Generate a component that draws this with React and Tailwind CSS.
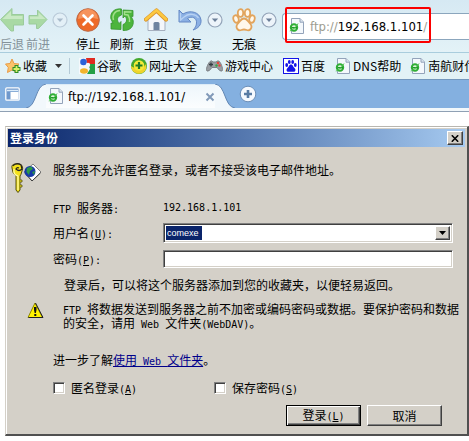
import React from "react";

const UI = "font-['Noto_Sans_CJK_SC',sans-serif]";
const URL_FONT = "font-['DejaVu_Sans_Condensed','DejaVu_Sans',sans-serif]";

/* Half-width latin text inside the dialog */
function L({ children }) {
  return (
    <span className="font-['DejaVu_Sans_Mono',monospace] text-[10px] leading-none whitespace-pre">{children}</span>
  );
}

function PageIcon() {
  return (
    <svg className="shrink-0" width="16" height="17" viewBox="0 0 16 17" aria-hidden="true">
      <path d="M2.500 .5H11L14.500 4V15.500H2.500Z" fill="#f4f8fc" stroke="#93a3ba" />
      <path d="M11 .5V4.200H14.500" fill="#dbe4ef" stroke="#93a3ba" />
      <circle cx="5" cy="9.500" r="3.200" fill="#e9f8e6" stroke="#2fae35" strokeWidth="2" />
      <path d="M2.500 9.700H8" stroke="#1d9a28" strokeWidth="1.500" />
      <path d="M.8 13C3 12.500 7.500 9 9 5.500" fill="none" stroke="#4cc04c" strokeWidth="1" />
    </svg>
  );
}

function ChevronButton({ className, label, faded }) {
  return (
    <button type="button" aria-label={label} className={"mt-3 h-4 w-4 shrink-0 " + className}>
      <svg width="16" height="16" viewBox="0 0 16 16" opacity={faded ? 0.45 : 1}>
        <circle cx="8" cy="8" r="7" fill="#edf4fa" stroke="#93a3b8" strokeWidth="1.200" />
        <path d="M4.800 6.500H11.200L8 10Z" fill="#6c7f99" />
      </svg>
    </button>
  );
}

function Tool({ label, className = "", children }) {
  return (
    <button type="button" className={"flex w-6 shrink-0 flex-col items-center pt-2 whitespace-nowrap " + className}>
      {children}
      <span className="mt-1 text-[12px] leading-4">{label}</span>
    </button>
  );
}

function BackIcon() {
  return (
    <svg width="24" height="24" viewBox="0 0 24 24">
      <path d="M.5 11.500L12 .5V6.500H23.500V17H13.500V23H11Z" fill="#a9d9a4" stroke="#9bcb9c" strokeLinejoin="round" />
      <path d="M2.500 11L11 3V8H22.500V11Z" fill="#c9e9c4" />
    </svg>
  );
}

function ForwardIcon() {
  return (
    <svg width="24" height="24" viewBox="0 0 24 24">
      <path d="M21 11.500L11.500 2V7.500H3V16H10.500V20.500H12.500Z" fill="#a9d9a4" stroke="#9bcb9c" strokeLinejoin="round" />
      <path d="M19.500 11L12.500 4.500V8.500H4V11Z" fill="#c9e9c4" />
    </svg>
  );
}

function StopIcon() {
  return (
    <svg width="24" height="24" viewBox="0 0 24 24">
      <circle cx="12" cy="12" r="11.300" fill="#ee6a28" stroke="#bb6a48" />
      <path d="M2 11A10 10 0 0 1 22 11Q12 8 2 11Z" fill="#f6935c" />
      <path d="M7.500 7.500L16.500 16.500M16.500 7.500L7.500 16.500" stroke="#fff" strokeWidth="2.600" strokeLinecap="round" />
    </svg>
  );
}

function RefreshIcon() {
  return (
    <svg width="24" height="24" viewBox="0 0 24 24">
      <path d="M11.500 1C4 0 0 5 .8 10.500L3 15.500L1 15V21L11 21.500V13.500L9 15.500C6.500 12 7 8.500 11.500 7Z" fill="#4cb53c" stroke="#36942e" strokeWidth=".8" strokeLinejoin="round" />
      <path d="M13 22.500C20.500 23 24 18 23.200 12.500L21 8L23 8.500V2.500L13 2V10L15 8C17.500 11.500 17 15 13 16.500Z" fill="#4cb53c" stroke="#36942e" strokeWidth=".8" strokeLinejoin="round" />
      <path d="M10 2.500C4.500 3 2 7 3.500 12M21.500 4L14.500 3.800V6.500L18 7Q20 10 19.500 14" fill="none" stroke="#a2e08c" strokeWidth="1.500" />
    </svg>
  );
}

function HomeIcon() {
  return (
    <svg width="24" height="24" viewBox="0 0 24 24">
      <path d="M4 10V22.500H21V10L12.500 3Z" fill="#f3f6fa" stroke="#a5afbe" />
      <path d="M9.500 22V15.500Q9.500 14 11 14H14Q15.500 14 15.500 15.500V22Z" fill="#6d83a0" />
      <path d="M2 11.500L12.500 2.500L22 11.500" fill="none" stroke="#d8912a" strokeWidth="4.200" strokeLinejoin="round" strokeLinecap="round" />
      <path d="M2 11.300L12.500 2.300L22 11.300" fill="none" stroke="#fcc840" strokeWidth="2.800" strokeLinejoin="round" strokeLinecap="round" />
    </svg>
  );
}

function UndoIcon() {
  return (
    <svg width="24" height="24" viewBox="0 0 24 24">
      <path
        d="M1 2V14H13L9.500 10.500C14 7.500 19 10 18.500 15C18.400 18 17 20 15 22C20 20.500 23.500 17 23 12C22 4 12 1.500 5 6Z"
        fill="#8bb0e4"
        stroke="#6488c4"
        strokeLinejoin="round"
      />
      <path d="M2.500 5V12L6 9C11 4.500 18 6 20.500 10" fill="none" stroke="#b8d2f3" strokeWidth="1.300" />
    </svg>
  );
}

function PawIcon() {
  return (
    <svg width="24" height="24" viewBox="0 0 24 24">
      <g fill="#fff8ec" stroke="#e2a45c" strokeWidth="1.800">
        <ellipse cx="4" cy="11" rx="2.600" ry="3.800" transform="rotate(-15 4 11)" />
        <ellipse cx="8.500" cy="5" rx="2.700" ry="3.900" />
        <ellipse cx="15.500" cy="5" rx="2.700" ry="3.900" />
        <ellipse cx="20" cy="11" rx="2.600" ry="3.800" transform="rotate(15 20 11)" />
        <path d="M12 10.500C8.500 10.500 8 14 5.500 16C3 19.500 6 23.500 9.500 22Q12 21 14.500 22C18 23.500 21 19.500 18.500 16C16 14 15.500 10.500 12 10.500Z" />
      </g>
    </svg>
  );
}

function StarIcon() {
  return (
    <svg width="16" height="16" viewBox="0 0 16 16">
      <path d="M7 1L9 5.500L14 6L10.500 9.500L11.500 14L7 12L2.500 14.500L3.300 9.500L.5 6L5 5.500Z" fill="#fbc36a" stroke="#e89c48" strokeLinejoin="round" />
      <path d="M11.500 7V15M7.500 11H15.500" stroke="#2f8c28" strokeWidth="4" />
      <path d="M11.500 8V14M8.500 11H14.500" stroke="#d7f26a" strokeWidth="1.800" />
    </svg>
  );
}

function GoogleIcon() {
  return (
    <svg width="16" height="16" viewBox="0 0 16 16">
      <rect width="16" height="16" fill="#f4f8fb" />
      <path d="M7 0H16V6H8Z" fill="#e02a20" />
      <path d="M9 6H16V16H8L11 11Z" fill="#23a045" />
      <path d="M0 9H5L7 16H0Z" fill="#f7f9fc" />
      <circle cx="4.500" cy="4" r="3.300" fill="#2c62d8" />
      <circle cx="9" cy="7" r="2.200" fill="#f4f8fb" />
      <ellipse cx="5" cy="13" rx="4" ry="2.800" fill="#f1b42b" />
    </svg>
  );
}

function NavSiteIcon() {
  return (
    <svg width="16" height="16" viewBox="0 0 16 16">
      <circle cx="8" cy="8" r="8" fill="#43a82c" />
      <path d="M0 8A8 8 0 0 0 14 13Q16 10 15 6Q10 15 0 8Z" fill="#efd32c" />
      <circle cx="8" cy="7.500" r="5.300" fill="#f5ea38" />
      <path d="M8 4V11M4.500 7.500H11.500" stroke="#207d27" strokeWidth="2.200" />
    </svg>
  );
}

function GamepadIcon() {
  return (
    <svg width="17" height="16" viewBox="0 0 17 16">
      <path d="M4 3.500Q5.500 2 7 4H10Q12 2 13.500 3.500C15.500 6 17.500 12 16 13Q14 14 11 9.500H6Q3 14 1 13C-.5 12 1.500 6 4 3.500Z" fill="#999ea2" stroke="#7c8186" />
      <path d="M3 6.500H7M5 4.500V8.500" stroke="#333b40" strokeWidth="1.300" />
      <circle cx="12" cy="5" r="1.300" fill="#e3463c" />
      <circle cx="13.500" cy="7.500" r="1.200" fill="#e3463c" />
      <circle cx="10.500" cy="7.500" r="1.200" fill="#35a447" />
    </svg>
  );
}

function BaiduIcon() {
  return (
    <svg width="16" height="16" viewBox="0 0 16 16">
      <rect x=".5" y=".5" width="15" height="15" fill="#fff" stroke="#1414e8" />
      <g fill="#1414e8">
        <ellipse cx="3.700" cy="7" rx="1.400" ry="2" />
        <ellipse cx="6.300" cy="4" rx="1.400" ry="2" />
        <ellipse cx="9.700" cy="4" rx="1.400" ry="2" />
        <ellipse cx="12.300" cy="7" rx="1.400" ry="2" />
        <path d="M8 6.500C6 6.500 6 9 4.500 10C2.500 12 4 14.500 6 13.700H10C12 14.500 13.500 12 11.500 10C10 9 10 6.500 8 6.500Z" />
      </g>
    </svg>
  );
}

function Bookmark({ icon, label, className = "" }) {
  return (
    <a href="#" className={"flex shrink-0 items-center gap-[2px] whitespace-nowrap " + className}>
      {icon}
      {label}
    </a>
  );
}

function KeyIcon() {
  return (
    <svg className="shrink-0 self-end" width="30" height="30" viewBox="0 0 30 30">
      <path d="M13 9L22 1L30 9L21 18Z" fill="#fff" stroke="#808080" />
      <path d="M14 10L21 18L29.500 10" fill="none" stroke="#404040" />
      <circle cx="19" cy="8.500" r="5.500" fill="#1838a8" />
      <path d="M16 5L20 3.500L22 6L19 8L18 12L15.500 9ZM21 9L24 8L23 12Z" fill="#2c9a46" />
      <path d="M1 5Q0 1 5 1H9Q13 3 11 8Q10 12 9 13V27L7 29.500L5 27V13Q1 10 1 5Z" fill="#f4e11c" stroke="#55500c" />
      <path d="M3 6Q2 12 7 13V27" fill="none" stroke="#fffbaa" strokeWidth="1.200" />
      <path d="M9 17H11V19H9M9 22H11V24H9" fill="#f4e11c" stroke="#55500c" strokeWidth=".8" />
      <path d="M2 3Q5-1 10 2L11 6Q8 9 5 6Q6 4 8 5" fill="none" stroke="#222" strokeWidth="1.200" />
    </svg>
  );
}

function WarningIcon() {
  return (
    <svg className="shrink-0" width="17" height="17" viewBox="0 0 17 17">
      <path d="M8 1L15.500 15.500H1Z" fill="#fff200" stroke="#8c8500" strokeLinejoin="round" />
      <path d="M8.500 1L16 15.500H1.500" fill="none" stroke="#222" strokeLinejoin="round" />
      <path d="M7 5H9.500V8L8.800 11H7.700L7 8Z" fill="#111" />
      <rect x="7.300" y="12" width="2" height="2" fill="#111" />
    </svg>
  );
}

const sunken =
  "border border-t-[#808080] border-l-[#808080] border-r-white border-b-white shadow-[inset_1px_1px_0_#404040,inset_-1px_-1px_0_#d4d0c8]";
const raised =
  "border border-t-white border-l-white border-r-[#404040] border-b-[#404040] shadow-[inset_-1px_-1px_0_#808080] bg-[#d4d0c8]";

function Check({ id, label, k }) {
  return (
    <div className="flex items-center gap-[6px]">
      <input id={id} type="checkbox" className={"h-3 w-3 appearance-none bg-white " + sunken} />
      <label htmlFor={id}>
        {label}
        <L>(<u>{k}</u>)</L>
      </label>
    </div>
  );
}

export default function App() {
  return (
    <div className={"overflow-x-hidden bg-white text-[12px] text-black " + UI}>
      <header>
        <div className="flex h-[53px] items-start border-b border-[#a9cddd] bg-linear-to-b from-[#d6e9f3] to-[#e3f2f7]">
          <Tool label="后退" className="text-[#84929a]"><BackIcon /></Tool>
          <Tool label="前进" className="ml-[2px] text-[#84929a]"><ForwardIcon /></Tool>
          <ChevronButton label="历史" faded className="ml-[2px]" />
          <Tool label="停止" className="ml-2"><StopIcon /></Tool>
          <Tool label="刷新" className="ml-[10px]"><RefreshIcon /></Tool>
          <Tool label="主页" className="ml-[10px]"><HomeIcon /></Tool>
          <Tool label="恢复" className="ml-[10px]"><UndoIcon /></Tool>
          <ChevronButton label="恢复选项" className="ml-[5px]" />
          <Tool label="无痕" className="ml-[9px]"><PawIcon /></Tool>
          <ChevronButton label="无痕选项" className="ml-[5px]" />
          <div className="relative mt-[13px] ml-[5px] flex h-[27px] min-w-0 flex-1 items-center rounded-l border border-r-0 border-[#8ba6bd] bg-white pl-[6px]">
            <PageIcon />
            <span className={"ml-[5px] text-[13px] whitespace-nowrap text-[#9c9c90] " + URL_FONT}>
              ftp://<span className="text-black">192.168.1.101</span>/
            </span>
            <div className="absolute -top-[7px] left-[2px] h-9 w-[146px] rounded-[2px] border-2 border-[#fb0000]" />
          </div>
        </div>

        <nav className="flex h-[26px] items-center overflow-hidden bg-[#e2f2f6] pl-[5px]">
          <button type="button" className="flex shrink-0 items-center gap-[2px]">
            <StarIcon />
            收藏
            <svg className="ml-[6px]" width="7" height="4" viewBox="0 0 7 4"><path d="M0 0H7L3.500 4Z" fill="#333" /></svg>
          </button>
          <div className="mr-[9px] ml-[7px] h-4 w-px shrink-0 bg-[#b4cad6]" />
          <Bookmark icon={<GoogleIcon />} label="谷歌" />
          <Bookmark icon={<NavSiteIcon />} label="网址大全" className="ml-[10px]" />
          <Bookmark icon={<GamepadIcon />} label="游戏中心" className="ml-[9px]" />
          <Bookmark icon={<BaiduIcon />} label="百度" className="ml-[10px]" />
          <Bookmark icon={<PageIcon />} label="DNS帮助" className="ml-[10px]" />
          <Bookmark icon={<PageIcon />} label="南航财付" className="ml-[9px]" />
        </nav>

        <div className="flex h-[29px] items-stretch border-t border-[#7397bd] bg-[#84b0e0]">
          <button type="button" aria-label="标签列表" className="flex w-[26px] items-center pl-[5px]">
            <svg width="15" height="14" viewBox="0 0 15 14">
              <rect x=".8" y=".8" width="13.400" height="12.400" rx="1" fill="#6f98cc" stroke="#fff" strokeWidth="1.300" />
              <path d="M2 3.500H13" stroke="#dcecfb" strokeWidth="1.500" />
              <rect x="5.500" y="5" width="8" height="7.500" fill="#fff" />
            </svg>
          </button>
          <svg className="mt-1 shrink-0" width="20" height="24" viewBox="0 0 20 24">
            <path d="M0 24C11 23 9 1 20 0V24Z" fill="#f2f8fc" />
            <path d="M0 24C11 23 9 1 20 0" fill="none" stroke="#6488b4" />
          </svg>
          <div className="mt-1 flex w-[169px] shrink-0 items-center border-t border-[#dcebf7] bg-linear-to-b from-[#eef6fb] to-[#fbfdfe] pl-[2px]">
            <PageIcon />
            <span className={"ml-1 text-[13px] " + URL_FONT}>ftp://192.168.1.101/</span>
            <button type="button" aria-label="关闭标签" className="ml-auto shrink-0">
              <svg width="10" height="10" viewBox="0 0 10 10"><path d="M1.500 1.500L8.500 8.500M8.500 1.500L1.500 8.500" stroke="#8199b8" strokeWidth="2" /></svg>
            </button>
          </div>
          <svg className="mt-1 shrink-0" width="20" height="24" viewBox="0 0 20 24">
            <path d="M20 24C9 23 11 1 0 0V24Z" fill="#f2f8fc" />
            <path d="M20 24C9 23 11 1 0 0" fill="none" stroke="#6488b4" />
          </svg>
          <button type="button" aria-label="新建标签" className="ml-1 shrink-0">
            <svg width="18" height="18" viewBox="0 0 18 18">
              <circle cx="9" cy="9" r="7.800" fill="#f6faff" stroke="#6c8fb8" />
              <path d="M9 5V13M5 9H13" stroke="#597ca4" strokeWidth="2.600" />
            </svg>
          </button>
        </div>
        <div className="h-1 border-b border-[#8fa0b4] bg-[#f2f8fb]" />
      </header>

      <main className="pt-[14px] pb-[5px] pl-[5px]">
        <form
          onSubmit={(e) => e.preventDefault()}
          className="border border-t-[#b8b6b0] border-r-2 border-b-2 border-l-[#d4d0c8] border-r-[#505050] border-b-[#505050] bg-[#d4d0c8] p-px pb-2 shadow-[inset_1px_1px_0_#ffffff]"
        >
          <div className="m-px mb-0 flex h-[18px] items-center justify-between bg-linear-to-r from-[#0a246a] to-[#a6caf0] pr-[2px] pl-[2px]">
            <h1 className="text-[12px] leading-none font-bold text-white">登录身份</h1>
            <button type="button" aria-label="关闭" className={"flex h-[14px] w-4 items-center justify-center " + raised}>
              <svg width="8" height="7" viewBox="0 0 8 7"><path d="M.8 .3L7.200 6.700M7.200 .3L.8 6.700" stroke="#000" strokeWidth="1.600" /></svg>
            </button>
          </div>

          <div className="pr-[13px] pl-[4px] leading-[18px] whitespace-nowrap">
            <div className="mt-[14px] flex h-8 gap-3">
              <KeyIcon />
              <p>服务器不允许匿名登录，或者不接受该电子邮件地址。</p>
            </div>
            <div className="pl-[42px]">
              <div className="mt-[6px] flex items-center">
                <span className="w-[110px]"><L>FTP </L>服务器<L>:</L></span>
                <L>192.168.1.101</L>
              </div>
              <div className="mt-[6px] flex h-5 items-center">
                <label htmlFor="user" className="w-[110px]">用户名<L>(<u>U</u>):</L></label>
                <div className={"flex h-5 flex-1 items-stretch bg-white p-[2px] " + sunken}>
                  <input
                    id="user"
                    type="text"
                    defaultValue="comexe"
                    className="[field-sizing:content] bg-[#0a246a] pr-[3px] pl-px font-['Liberation_Sans',sans-serif] text-[9px] leading-none text-white outline-none"
                  />
                  <button type="button" aria-label="用户名列表" className={"ml-auto flex w-[15px] items-center justify-center " + raised}>
                    <svg width="7" height="4" viewBox="0 0 7 4"><path d="M0 0H7L3.500 4Z" /></svg>
                  </button>
                </div>
              </div>
              <div className="mt-[7px] flex h-[18px] items-center">
                <label htmlFor="pass" className="w-[110px]">密码<L>(<u>P</u>):</L></label>
                <input id="pass" type="password" className={"h-[18px] min-w-0 flex-1 bg-white px-1 outline-none " + sunken} />
              </div>
              <p className="mt-[8px] pl-[11px]">登录后，可以将这个服务器添加到您的收藏夹，以便轻易返回。</p>
            </div>
            <div className="mt-[8px] flex gap-[19px] pl-4">
              <WarningIcon />
              <p className="leading-[13px]">
                <L>FTP </L>将数据发送到服务器之前不加密或编码密码或数据。要保护密码和数据
                <br />
                的安全，请用<L> Web </L>文件夹<L>(WebDAV)</L>。
              </p>
            </div>
            <div className="pl-[42px]">
              <p className="mt-[21px]">
                进一步了解<a href="#" className="text-[#00008b] underline">使用<L> Web </L>文件夹</a>。
              </p>
              <div className="mt-[10px] flex">
                <div className="w-[161px]"><Check id="anon" label="匿名登录" k="A" /></div>
                <Check id="save" label="保存密码" k="S" />
              </div>
              <div className="mt-2 flex justify-end gap-[6px] pr-[11px]">
                <button type="submit" className="h-[21px] w-[75px] border border-black bg-[#d4d0c8] leading-none shadow-[inset_1px_1px_0_#ffffff,inset_-1px_-1px_0_#404040,inset_-2px_-2px_0_#808080]">
                  登录<L>(<u>L</u>)</L>
                </button>
                <button type="button" className={"h-[21px] w-[75px] leading-none " + raised}>取消</button>
              </div>
            </div>
          </div>
        </form>
      </main>
    </div>
  );
}
